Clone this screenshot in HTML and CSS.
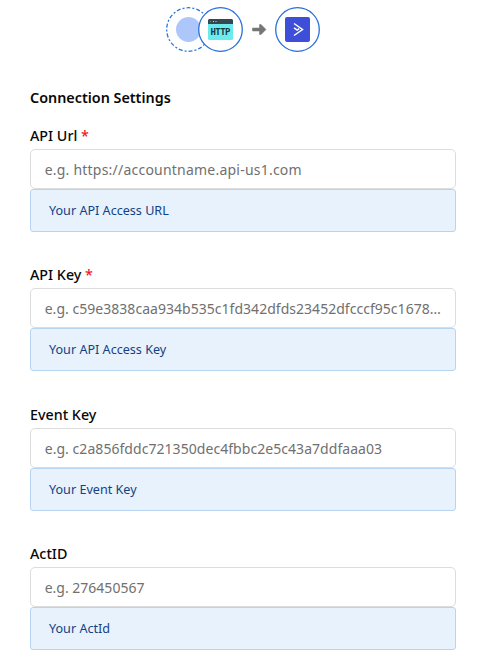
FILE: index.html
```html
<!DOCTYPE html>
<html lang="en">
<head>
<meta charset="utf-8">
<title>Connection Settings</title>
<link rel="stylesheet" href="styles.css">
</head>
<body>
<header class="flow">
<svg width="156" height="48" viewBox="0 0 156 48" aria-hidden="true">
<circle cx="24.500" cy="24.500" r="21.800" fill="#fff" stroke="#2d76dc" stroke-width="1.300" stroke-dasharray="4 2 2 2"/>
<circle cx="24.500" cy="24.500" r="12.500" fill="#aec7fa"/>
<circle cx="56.500" cy="24.500" r="21.800" fill="#fff" stroke="#2870d8" stroke-width="1.300"/>
<rect x="44" y="14" width="25" height="21" rx="1.500" fill="#6cebef"/>
<path d="M44 19v-3.500a1.500 1.500 0 0 1 1.500-1.500h22a1.500 1.500 0 0 1 1.500 1.500V19z" fill="#37474f"/>
<path d="M46 16.500h1" stroke="#e85b50"/><path d="M49 16.500h1m1.500 0h1" stroke="#ffd166"/>
<text class="http" x="46.500" y="30" textLength="20">HTTP</text>
<path d="M88.500 23h7v-3.500h1.500l5 5-5 5h-1.500V26h-7z" fill="#757575" stroke="#757575" stroke-width=".5" stroke-linejoin="round"/>
<circle cx="133.500" cy="24.500" r="21.800" fill="#fff" stroke="#2870d8" stroke-width="1.300"/>
<rect x="121" y="12" width="25" height="25" rx="2" fill="#3d4fd8"/>
<path d="M130 18.500l8.500 6-8.500 6M130 22.800l3.200 2.200 2-1.400" fill="none" stroke="#fff" stroke-width="1.500"/>
</svg>
</header>
<main class="settings">
<h1>Connection Settings</h1>
<section class="field"><label for="url">API Url <span class="required">*</span></label><input id="url" class="address" placeholder="e.g. https://accountname.api-us1.com"><p class="hint">Your API Access URL</p></section>
<section class="field"><label for="key">API Key <span class="required">*</span></label><input id="key" class="token" placeholder="e.g. c59e3838caa934b535c1fd342dfds23452dfcccf95c16787aa"><p class="hint">Your API Access Key</p></section>
<section class="field"><label for="event">Event Key</label><input id="event" placeholder="e.g. c2a856fddc721350dec4fbbc2e5c43a7ddfaaa03"><p class="hint">Your Event Key</p></section>
<section class="field"><label for="act">ActID</label><input id="act" class="account" placeholder="e.g. 276450567"><p class="hint">Your ActId</p></section>
</main>
</body>
</html>
```
FILE: styles.css
```css
* { box-sizing: border-box; }
body { margin: 0; background: #fff; color: #080808; font: 14.300px/20px "Noto Sans", sans-serif; overflow: hidden; }
.flow { height: 88px; padding: 5px 0 0 164px; }
.flow svg { display: block; }
.http { font: 700 9px "DejaVu Sans Mono", monospace; fill: #18383d; }
.settings { width: 426px; margin-left: 30px; }
h1 { margin: 0 0 18.300px; font-size: 14.350px; line-height: 20px; font-weight: 600; }
.field { margin-bottom: 33.130px; }
label { display: block; height: 23px; font-weight: 500; }
.required { color: #f01822; }
input { display: block; width: 100%; height: 40px; padding: 1px 12px 0 13.700px; border: 1px solid #dcdcdc; border-radius: 5px; font: 14px "Noto Sans", sans-serif; letter-spacing: .05px; color: #333; text-overflow: ellipsis; }
.address { letter-spacing: .22px; }
.token { letter-spacing: .03px; }
.account { letter-spacing: 0; }
input::placeholder { color: #707070; opacity: 1; }
.hint { margin: 0; height: 43px; padding: 0 18px; border: 1px solid #b7d5f3; border-radius: 3px; background: #e7f2fd; color: #134284; font-size: 12.600px; line-height: 41px; }
```
